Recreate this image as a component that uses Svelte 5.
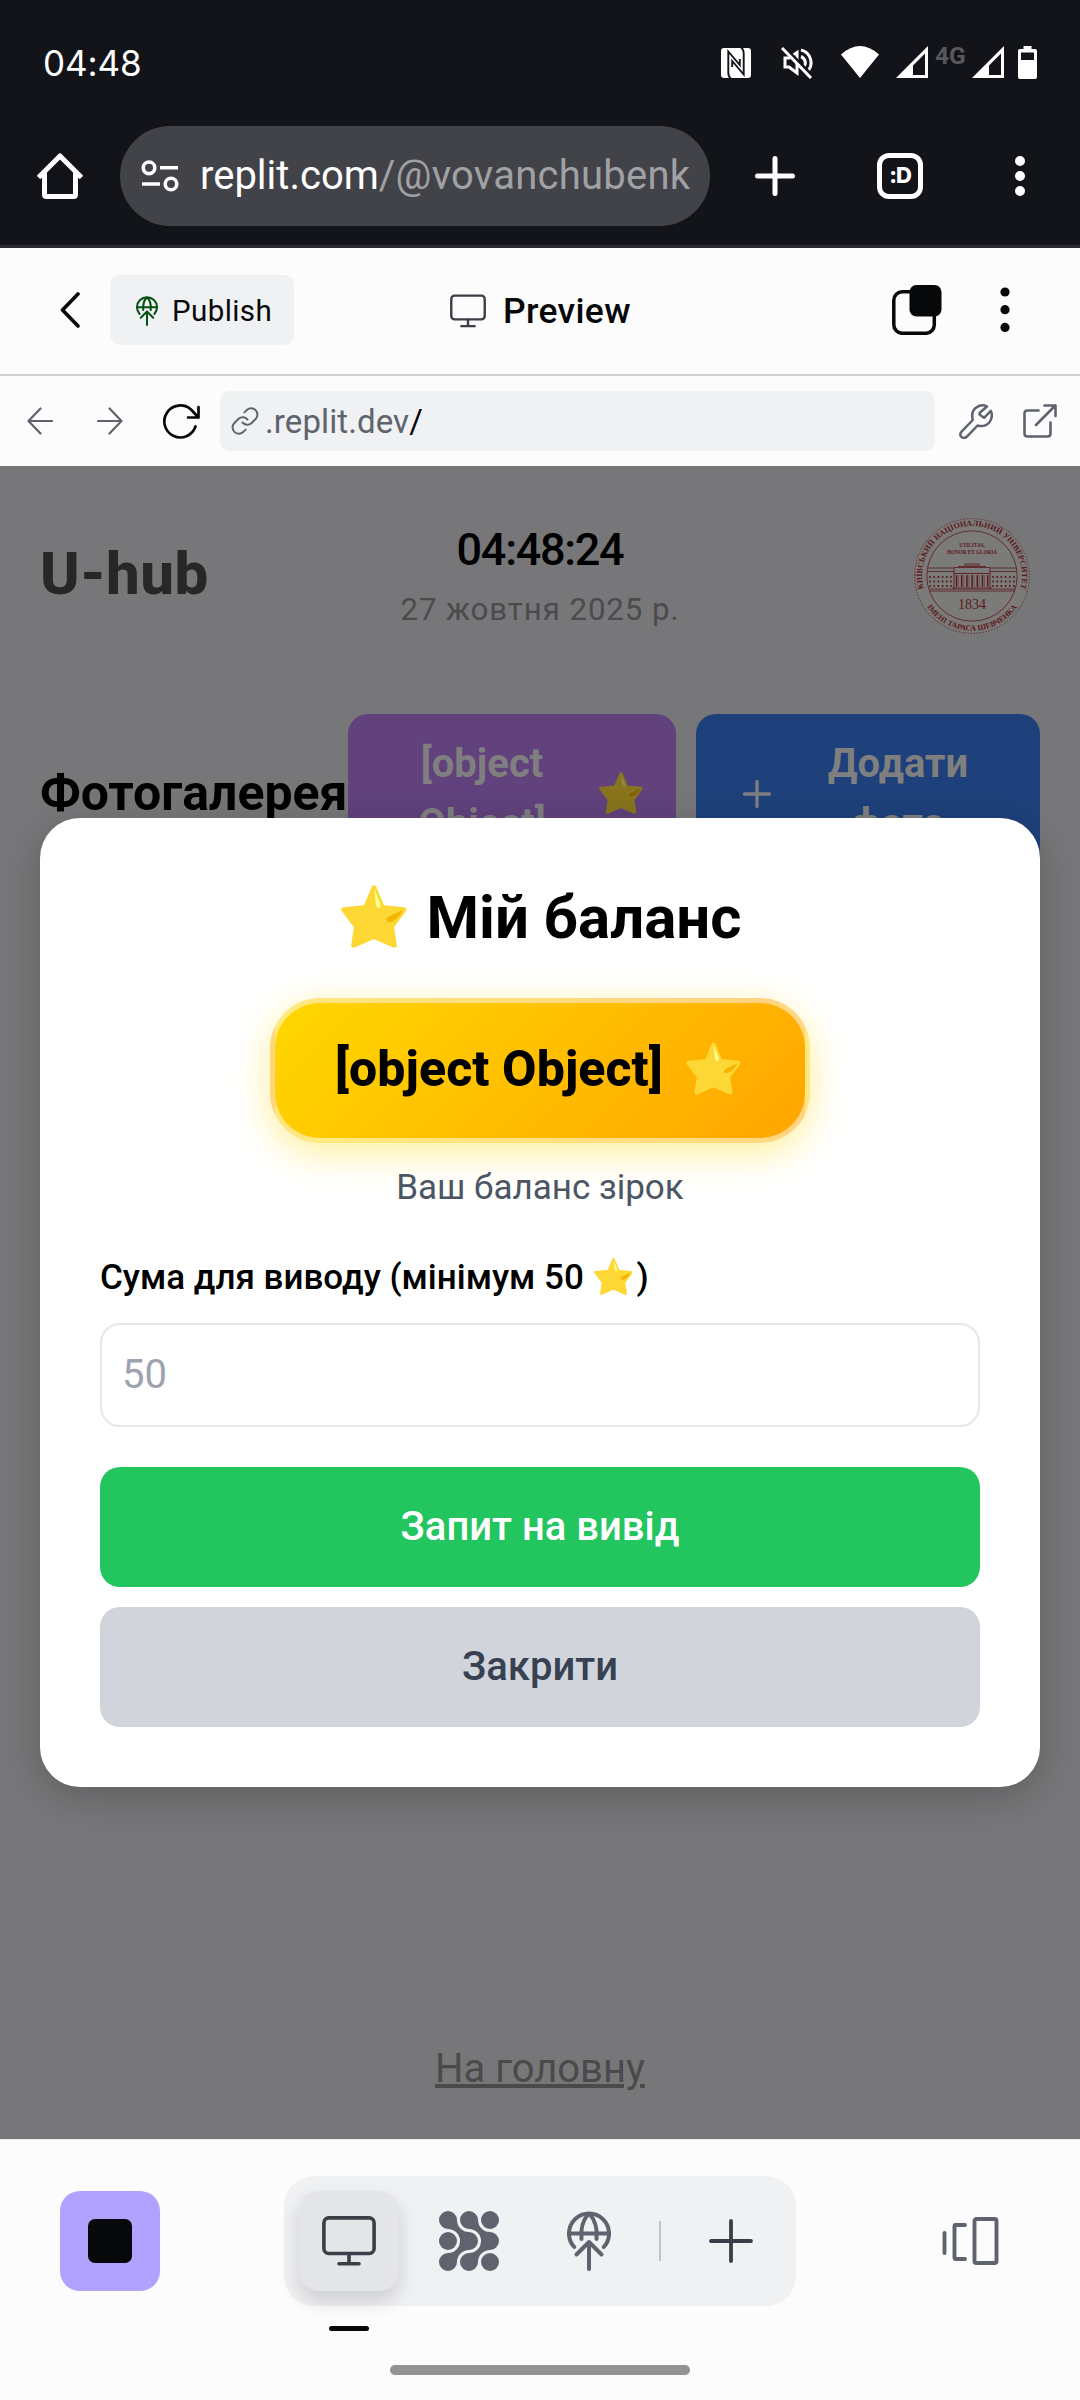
<script>
  const timeNow = '04:48';
  const clock = '04:48:24';
  const windows = [0, 1, 2, 3, 4, 5];
  const columns = [0, 1, 2, 3, 4, 5, 6];
</script>

{#snippet star()}
  <svg class="star" viewBox="0 0 66 63" aria-hidden="true">
    <path d="M33 2.6 41.3 22.5 63 24.6 50.6 41.6 53.4 60.4 32.8 51.6 12.6 60.4 15.4 41.6 2.6 24.6 24.7 22.5Z" fill="#fdd835" stroke="#fdd835" stroke-width="4.8" stroke-linejoin="round" />
    <path d="M34.2 5.5 38.8 17.5Q40.4 22.6 37.8 22.9 35.3 23 34.6 17.6L33.5 6.4Q33.6 4.6 34.2 5.5Z" fill="#ffff8d" />
    <path d="M62 26 56 33.5Q49 39 45.8 36 44.6 33.2 49.8 30.5L60.8 25.7Q62.8 25 62 26Z" fill="#f4b400" />
  </svg>
{/snippet}

{#snippet globe()}
  <svg class="globe" viewBox="0 0 44 60" fill="none" stroke="currentColor" stroke-width="4" stroke-linecap="round" stroke-linejoin="round" aria-hidden="true">
    <path d="M7.2 36A20 20 0 1 1 36.8 36" />
    <path d="M2 22.5H42M21 3.5C16 9 13.5 17 14.5 28M23 3.5C28 9 30.5 17 29.5 28" />
    <path d="M22 31V58M9.5 43.5 22 31 34.5 43.5" />
  </svg>
{/snippet}

{#snippet monitor()}
  <svg class="monitor" viewBox="0 0 54 50" fill="none" stroke="currentColor" stroke-width="3.6" stroke-linecap="round" stroke-linejoin="round" aria-hidden="true">
    <rect x="1.9" y="1.9" width="50.2" height="35.6" rx="5" />
    <path d="M27 38V47.6M17 47.7H37" />
  </svg>
{/snippet}

<div class="screen">
  <header class="device">
    <div class="status">
      <span class="time">{timeNow}</span>
      <svg class="nfc" viewBox="0 0 30 30">
        <rect width="30" height="30" rx="3" fill="#fff" />
        <path d="M10.500 31Q7.300 29 7.300 25V3.500L18.800 17V11M19.500-1Q22.700 1 22.700 5V26.500L11.200 13V19" fill="none" stroke="#131419" stroke-width="1.900" />
      </svg>
      <svg class="mute" viewBox="0 0 32 32" fill="none" stroke="#fff" stroke-width="3">
        <path d="M4 11H8L16 5.5V26L8 20H4Z" />
        <path d="M20 3A13 13 0 0 1 26 25M20 9.5A7 7 0 0 1 23 20" />
        <path d="M3 0 33 30" stroke="#131419" stroke-width="3" />
        <path d="M1 1 30 31" />
      </svg>
      <svg class="wifi" viewBox="0 0 38 32"><path d="M0 8.5Q19-8.5 38 8.5L19 32Z" fill="#fff" /></svg>
      <svg class="signal" viewBox="0 0 32 32"><path d="M32 0V32H0ZM29 7.5 17 19.5V29H29Z" fill="#fff" fill-rule="evenodd" /></svg>
      <span class="net">4G</span>
      <svg class="signal second" viewBox="0 0 32 32"><path d="M32 0V32H0ZM29 7.5 17 19.5V29H29Z" fill="#fff" fill-rule="evenodd" /></svg>
      <svg class="battery" viewBox="0 0 19 33"><path d="M5.5 0H13.5V3H17Q19 3 19 5V31Q19 33 17 33H2Q0 33 0 31V5Q0 3 2 3H5.5ZM3 6.5V14H16V6.5Z" fill="#fff" fill-rule="evenodd" /></svg>
    </div>
    <div class="browser">
      <svg class="home" viewBox="0 0 46 46" fill="none" stroke="#fff" stroke-width="5" stroke-linejoin="round">
        <path d="M1.5 24.5 23 3 44.500 24.500" />
        <path d="M7.500 20V41.500Q7.500 43.500 9.500 43.500H36.500Q38.500 43.500 38.500 41.500V20" />
      </svg>
      <div class="pill">
        <svg class="tune" viewBox="0 0 38 32" fill="none" stroke="#fff" stroke-width="3.6">
          <circle cx="8" cy="7.800" r="5.800" /><path d="M19 7.800H37M1 24H19" /><circle cx="30" cy="24" r="5.800" />
        </svg>
        <span class="address">replit.com<span>/@vovanchubenk</span></span>
      </div>
      <svg class="plus" viewBox="0 0 40 40" stroke="#fff" stroke-width="5" stroke-linecap="round"><path d="M20 2.500V37.500M2.500 20H37.500" /></svg>
      <div class="tabs">:D</div>
      <svg class="more" viewBox="0 0 10 40" fill="#fff"><circle cx="5" cy="5" r="5" /><circle cx="5" cy="20" r="5" /><circle cx="5" cy="35" r="5" /></svg>
    </div>
  </header>

  <nav class="title-bar">
    <svg class="back" viewBox="0 0 20 36" fill="none" stroke="#07080a" stroke-width="3.600" stroke-linecap="round" stroke-linejoin="round"><path d="M18 2 2.500 18 18 34" /></svg>
    <button class="publish">{@render globe()}<span>Publish</span></button>
    <div class="preview">{@render monitor()}<span>Preview</span></div>
    <svg class="copy" viewBox="0 0 50 50">
      <rect x="1.800" y="6.800" width="40.500" height="41.500" rx="8.500" fill="none" stroke="#07080a" stroke-width="3.500" />
      <rect x="17.500" y="0" width="32" height="31.500" rx="7" fill="#07080a" />
    </svg>
    <svg class="kebab" viewBox="0 0 10 46" fill="#07080a"><circle cx="5" cy="5" r="4.600" /><circle cx="5" cy="22.700" r="4.600" /><circle cx="5" cy="40.400" r="4.600" /></svg>
  </nav>

  <nav class="url-bar">
    <svg class="arrow" viewBox="0 0 26 28" fill="none" stroke="#5f636d" stroke-width="2.200" stroke-linecap="round" stroke-linejoin="round"><path d="M25 14H1.500M13.500 1.500 1.500 14 13.500 26.500" /></svg>
    <svg class="arrow forward" viewBox="0 0 26 28" fill="none" stroke="#5f636d" stroke-width="2.200" stroke-linecap="round" stroke-linejoin="round"><path d="M1 14H24.500M12.500 1.500 24.500 14 12.500 26.500" /></svg>
    <svg class="reload" viewBox="0 0 38 36" fill="none" stroke="#07080a" stroke-width="2.700" stroke-linecap="round" stroke-linejoin="round"><path d="M32.500 23.500A16 16 0 1 1 28 6.500L35.500 14.500M35.500 4V14.500H25" /></svg>
    <div class="field">
      <svg class="link" viewBox="0 0 28 28" fill="none" stroke="#5f636d" stroke-width="2" stroke-linecap="round" stroke-linejoin="round">
        <path d="M11.500 15.500A6.300 6.300 0 0 0 20.400 16.200L24.800 11.800A6.300 6.300 0 0 0 15.900 2.900L13.400 5.400" />
        <path d="M16.500 12.500A6.300 6.300 0 0 0 7.600 11.800L3.200 16.200A6.300 6.300 0 0 0 12.100 25.100L14.600 22.600" />
      </svg>
      <span>.replit.dev<b>/</b></span>
    </div>
    <svg class="wrench" viewBox="0 0 34 35" fill="none" stroke="#5f636d" stroke-width="2.500" stroke-linejoin="round"><path d="M28 2.500Q22-.5 16.300 4.200 11.800 8.500 13.800 16L2.800 27.300Q-.2 31 2.800 33.200 5.800 35 8.400 32.200L18.600 21.500Q26 23.500 30.200 18.500 34.500 13 31.800 6.800L25 13.800 20.500 10.500 20.800 8.800Z" /></svg>
    <svg class="open" viewBox="0 0 34 34" fill="none" stroke="#5f636d" stroke-width="2.600" stroke-linecap="round" stroke-linejoin="round"><path d="M15.500 6.500H4.500Q1.500 6.500 1.500 9.500V29.500Q1.500 32.500 4.500 32.500H24.500Q27.500 32.500 27.500 29.500V18.500M13 21 32.300 1.500M21.500 1.500H32.500V12" /></svg>
  </nav>

  <main>
    <div class="page-head">
      <h1>U-hub</h1>
      <div class="when"><strong>{clock}</strong><span>27 жовтня 2025 р.</span></div>
      <svg class="seal" viewBox="0 0 116 118">
        <defs>
          <path id="upper" d="M10.200 73.600A50 50 0 1 1 105.800 73.600" />
          <path id="lower" d="M6.500 77A54.500 54.500 0 0 0 109.500 77" />
        </defs>
        <circle cx="58" cy="59" r="57.300" fill="#7b7b79" stroke="#662c30" stroke-width="1" stroke-dasharray="1.500 1.500" />
        <circle cx="58" cy="59" r="45.200" fill="none" stroke="#622c2f" stroke-width="1" />
        <g fill="#5e171b" class="serif">
          <text class="ring"><textPath href="#upper" startOffset="50%" text-anchor="middle">КИЇВСЬКИЙ НАЦІОНАЛЬНИЙ УНІВЕРСИТЕТ</textPath></text>
          <text class="ring low"><textPath href="#lower" startOffset="50%" text-anchor="middle">ІМЕНІ ТАРАСА ШЕВЧЕНКА</textPath></text>
          <text class="motto" x="58" y="29.500" text-anchor="middle">UTILITAS,</text>
          <text class="motto" x="58" y="36.500" text-anchor="middle">HONOR ET GLORIA</text>
          <text class="year" x="58" y="91.500" text-anchor="middle">1834</text>
        </g>
        <path d="M13.500 51H40M76 51H102.500M13.500 54.500H40M76 54.500H102.500M15.500 72H101M16 74H100M38 71H78M40 50.500H76M51 47H65V49H51ZM44 49.500H72" fill="none" stroke="#5e2428" stroke-width=".9" />
        <path d="M40 51V72M76 51V72M40 56.500H76" fill="none" stroke="#5e171b" stroke-width=".9" />
        {#each windows as w}
          <path d="M{16 + w * 4.2} 59V70M{79 + w * 4.2} 59V70" stroke="#5e171b" stroke-width="1.500" stroke-dasharray="2 2.500" />
        {/each}
        {#each columns as c}
          <path d="M{42.5 + c * 5.2} 58V70" stroke="#5e171b" stroke-width="1.500" />
          <path d="M{44.5 + c * 5.2} 58V70" stroke="#6b5557" stroke-width="1" />
        {/each}
      </svg>
    </div>

    <section class="gallery">
      <h2>Фотогалерея</h2>
      <button class="coins"><span>[object<br />Object]</span>{@render star()}</button>
      <button class="add">
        <svg viewBox="0 0 40 40" stroke="#807f80" stroke-width="3.300" stroke-linecap="round"><path d="M20 7.500V32.500M7.500 20H32.500" /></svg>
        <span>Додати<br />фото</span>
      </button>
    </section>

    <a class="home-link" href="#top">На головну</a>

    <div class="modal" role="dialog">
      <h3>{@render star()}<span>Мій баланс</span></h3>
      <div class="badge"><span>[object Object]</span>{@render star()}</div>
      <p>Ваш баланс зірок</p>
      <label for="amount"><span>Сума для виводу (мінімум 50&nbsp;</span>{@render star()}<span>)</span></label>
      <input id="amount" type="text" placeholder="50" />
      <button class="request">Запит на вивід</button>
      <button class="close">Закрити</button>
    </div>
  </main>

  <footer>
    <div class="dock">
      <button class="stop" aria-label="Stop"><i></i></button>
      <div class="group">
        <div class="cell active">{@render monitor()}</div>
        <div class="cell">
          <svg class="dots" viewBox="0 0 60 60" fill="#5f636d">
            <path d="M9 0A9 9 0 0 1 18 9 12 12 0 0 0 30 21 9 9 0 0 1 30 39 12 12 0 0 0 18 51 9 9 0 1 1 9 42 12 12 0 0 0 9 18 9 9 0 0 1 9 0Z" />
            <path d="M30 0A9 9 0 0 1 39 9 12 12 0 0 0 51 21 9 9 0 0 1 51 39 12 12 0 0 0 39 51 9 9 0 1 1 30 42 12 12 0 0 0 30 18 9 9 0 0 1 30 0Z" />
            <circle cx="51" cy="9" r="9" /><circle cx="9" cy="30" r="9" /><circle cx="51" cy="51" r="9" />
          </svg>
        </div>
        <div class="cell">{@render globe()}</div>
        <hr />
        <div class="cell">
          <svg class="new" viewBox="0 0 44 44" stroke="#3b3e47" stroke-width="3.800" stroke-linecap="round"><path d="M22 2V42M2 22H42" /></svg>
        </div>
      </div>
      <svg class="panes" viewBox="0 0 57 48" fill="none" stroke="#5f636d" stroke-width="3.900" stroke-linecap="round" stroke-linejoin="round">
        <path d="M2.500 16V36M23 8H13.500Q12.500 8 12.500 9.500V40.500Q12.500 42 13.500 42H23" />
        <rect x="32.500" y="2" width="22" height="44" rx="2" />
      </svg>
    </div>
    <div class="marker"></div>
    <div class="gesture"></div>
  </footer>
</div>

<style>
  :global(body) { margin: 0; }
  * { box-sizing: border-box; }
  .screen { width: 1080px; height: 2400px; overflow: hidden; display: flex; flex-direction: column; background: #fcfcfc; font-family: Roboto, "Liberation Sans", sans-serif; color: #07080a; }
  svg { display: block; flex: none; }
  button { border: 0; padding: 0; font-family: inherit; }
  h1, h2, h3, p { margin: 0; }

  .device { height: 248px; background: #131419; border-bottom: 3px solid #2b2a30; }
  .status { height: 126px; padding: 0 43px; display: flex; align-items: center; }
  .time { font: 400 35px Inter, sans-serif; color: #fff; width: 100px; letter-spacing: -.1px; }
  .nfc { width: 30px; height: 30px; margin-left: auto; }
  .mute { width: 32px; height: 32px; margin-left: 30px; }
  .wifi { width: 38px; height: 32px; margin: -2px 0 0 28px; }
  .signal { width: 32px; height: 32px; margin: -2px 0 0 17px; }
  .net { font-size: 24.500px; line-height: 24px; font-weight: 700; color: #58595d; width: 30px; margin: -14px 0 0 7px; }
  .second { margin-left: 7px; }
  .battery { width: 19px; height: 33px; margin: -1px 0 0 14px; }
  .browser { height: 100px; display: flex; align-items: center; padding-left: 37px; }
  .home { width: 46px; height: 46px; }
  .pill { width: 590px; height: 100px; margin-left: 37px; border-radius: 50px; background: #424348; display: flex; align-items: center; padding: 0 20px 0 21px; }
  .tune { width: 38px; height: 32px; }
  .address { flex: 1; margin-left: 21px; white-space: nowrap; font-size: 40px; line-height: 60px; color: #fff; }
  .address span { color: #a0a1a4; letter-spacing: .25px; }
  .plus { width: 40px; height: 40px; margin-left: 45px; }
  .tabs { width: 46px; height: 46px; margin-left: 82px; border: 5px solid #fff; border-radius: 12px; color: #fff; font: 800 22px/34px Inter, sans-serif; text-align: center; letter-spacing: -1px; }
  .more { width: 10px; height: 40px; margin-left: 92px; }

  .title-bar { height: 128px; border-bottom: 2px solid #d1d1d1; display: flex; align-items: center; padding: 0 70px 2px 60px; }
  .back { width: 20px; height: 36px; }
  .publish { width: 184px; height: 70px; margin-left: 30px; padding: 1px 0 0 26px; border-radius: 10px; background: #f0f1f3; display: flex; align-items: center; font-size: 29.500px; letter-spacing: .4px; color: #07080a; }
  .publish span { margin-left: 14px; }
  .publish .globe { width: 22px; height: 30px; color: #04500f; }
  .preview { display: flex; align-items: center; width: 200px; margin: 1px 0 0 156px; font-size: 35.500px; font-weight: 500; letter-spacing: .3px; }
  .preview .monitor { width: 36px; height: 34px; margin-right: 17px; color: #3b3e47; }
  .copy { width: 50px; height: 50px; margin-left: auto; }
  .kebab { width: 10px; height: 46px; margin-left: 58px; }

  .url-bar { height: 90px; display: flex; align-items: center; padding-left: 27px; }
  .arrow { width: 26px; height: 28px; }
  .forward { margin-left: 44px; }
  .reload { width: 38px; height: 36px; margin-left: 40px; }
  .field { width: 715px; height: 60px; margin-left: 19px; border-radius: 10px; background: #f0f1f3; display: flex; align-items: center; padding-left: 11px; font-size: 33px; letter-spacing: .1px; color: #5f636d; }
  .field span { margin-left: 6px; }
  .field b { font-weight: 400; color: #07080a; }
  .link { width: 28px; height: 28px; }
  .wrench { width: 34px; height: 35px; margin-left: 24px; }
  .open { width: 34px; height: 34px; margin-left: 30px; }

  main { position: relative; height: 1673px; padding: 48px 40px 0; background: #777779; }
  .page-head { height: 120px; display: grid; grid-template-columns: 1fr auto 1fr; align-items: center; }
  h1 { margin-top: -1px; font-size: 60px; line-height: 80px; font-weight: 800; letter-spacing: .5px; color: #272727; }
  .when { display: flex; flex-direction: column; align-items: center; }
  .when strong { font-size: 45px; line-height: 70px; font-weight: 500; letter-spacing: -1.300px; color: #000; }
  .when span { font-size: 31.250px; line-height: 50px; letter-spacing: .9px; color: #4b4b4d; }
  .seal { width: 116px; height: 118px; justify-self: end; margin: 3px 10px 0 0; overflow: visible; }
  .serif { font-family: "Liberation Serif", serif; }
  .ring { font-size: 8px; font-weight: 700; }
  .low { font-size: 7.800px; }
  .motto { font-size: 5.200px; font-weight: 700; }
  .year { font-size: 14px; }
  .gallery { height: 160px; margin-top: 80px; display: flex; align-items: center; }
  h2 { width: 308px; margin-top: -2px; font-size: 50px; font-weight: 700; color: #000; white-space: nowrap; }
  .gallery button { height: 160px; border-radius: 20px; display: flex; align-items: center; color: #807f80; font-size: 40px; line-height: 60px; font-weight: 700; text-align: center; }
  .gallery button span { flex: 1; }
  .coins { width: 328px; padding: 0 33px 0 30px; background: #61427d; }
  .coins .star { width: 44px; height: 42px; margin: -3px 0 0 13px; filter: brightness(.54); }
  .add { width: 344px; margin-left: 20px; padding: 0 41px; background: #1e417b; }
  .add svg { width: 40px; height: 40px; margin-right: 20px; }
  .home-link { display: block; width: max-content; margin: 1165px auto 0; font-size: 40px; line-height: 60px; color: #4a4a4b; text-underline-offset: 2px; text-decoration-thickness: 4px; }

  .modal { position: absolute; left: 40px; top: 352px; width: 1000px; height: 969px; padding: 60px; border-radius: 40px; background: #fff; box-shadow: 0 10px 40px rgba(0, 0, 0, .2); display: flex; flex-direction: column; align-items: center; }
  .modal h3 { height: 80px; margin-top: -1px; padding-left: 2px; display: flex; align-items: center; gap: 20px; font-size: 60px; font-weight: 700; color: #000; }
  h3 .star { width: 66px; height: 63px; margin-top: -1px; }
  .badge { width: 540px; height: 145px; margin-top: 41px; flex: none; padding: 0 60px 3px; display: flex; align-items: center; justify-content: space-between; border: 5px solid rgba(255, 255, 255, .5); border-radius: 50px; background-image: linear-gradient(135deg, #ffd700, #ffa500); box-shadow: 0 10px 37px rgba(255, 215, 0, .4); font-size: 50px; font-weight: 800; letter-spacing: .1px; color: #000; white-space: nowrap; }
  .badge .star { width: 55px; height: 53px; margin: -1px 4px 0 0; }
  .modal p { margin-top: 20px; font-size: 35px; line-height: 50px; color: #4b5563; }
  label { width: 100%; height: 50px; margin-top: 39px; display: flex; align-items: center; font-size: 35px; font-weight: 500; color: #000; white-space: nowrap; }
  label .star { width: 39px; height: 37px; margin: -1px 4px 0 1px; }
  input { width: 880px; height: 104px; flex: none; margin-top: 21px; padding: 0 20px 1px; border: 2px solid #e5e7eb; border-radius: 20px; background: #fff; font: 400 40px Roboto, sans-serif; outline: 0; }
  input::placeholder { color: #9ca3af; opacity: 1; }
  .request, .close { width: 880px; height: 120px; flex: none; padding-bottom: 2px; border-radius: 20px; font-size: 40px; font-weight: 500; }
  .request { margin-top: 40px; background: #22c55e; color: #fff; }
  .close { margin-top: 20px; background: #d1d5db; color: #374151; }

  footer { height: 261px; border-top: 1px solid #ececee; background: #fcfcfc; padding-top: 36px; }
  .dock { height: 130px; display: flex; align-items: center; padding-left: 60px; }
  .stop { width: 100px; height: 100px; border-radius: 20px; background: #b1a2ff; display: grid; place-items: center; }
  .stop i { width: 44px; height: 44px; border-radius: 7px; background: #07080a; }
  .group { width: 512px; height: 130px; margin-left: 124px; padding: 0 15px; border-radius: 30px; background: #f0f1f3; display: flex; align-items: center; gap: 20px; }
  .cell { width: 100px; height: 100px; border-radius: 20px; display: grid; place-items: center; color: #5f636d; }
  .active { background: #e4e5e7; color: #3b3e47; box-shadow: 0 10px 20px rgba(0, 0, 0, .15); }
  .cell .monitor { width: 54px; height: 50px; }
  .cell .globe { width: 44px; height: 60px; }
  .dots { width: 60px; height: 60px; }
  .group hr { width: 2px; height: 40px; margin: 0; border: 0; background: #c2c3c6; }
  .new { width: 44px; height: 44px; }
  .panes { width: 57px; height: 48px; margin-left: 146px; }
  .marker { width: 40px; height: 5px; margin: 20px 0 0 329px; border-radius: 3px; background: #07080a; }
  .gesture { width: 300px; height: 10px; margin: 34px auto 0; border-radius: 5px; background: #929292; }
</style>
